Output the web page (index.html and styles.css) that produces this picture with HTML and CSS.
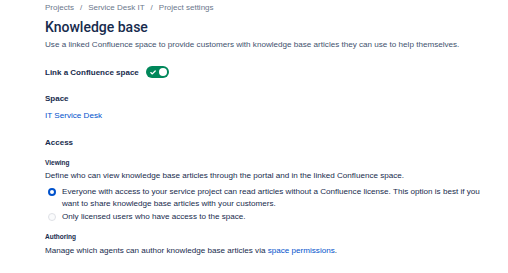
FILE: index.html
```html
<!DOCTYPE html>
<html lang="en">
<head>
    <meta charset="UTF-8">
    <title>Knowledge base</title>
    <link rel="stylesheet" href="styles.css">
</head>
<body>
    <div class="page">
        <nav class="crumbs">
            <a href="#">Projects</a><span class="sep">/</span><a href="#">Service Desk IT</a><span class="sep">/</span><a href="#">Project settings</a>
        </nav>
        <h1>Knowledge base</h1>
        <p class="lead">Use a linked Confluence space to provide customers with knowledge base articles they can use to help themselves.</p>

        <div class="toggle-row">
            <span class="toggle-label">Link a Confluence space</span>
            <span class="toggle">
                <svg class="tick" width="6" height="5" viewBox="0 0 6 5"><path d="M0.8 2.6 L2.3 3.9 L5.2 1" fill="none" stroke="#fff" stroke-width="1.3" stroke-linecap="round" stroke-linejoin="round"/></svg>
                <span class="knob"></span>
            </span>
        </div>

        <h2>Space</h2>
        <a class="link space-link" href="#">IT Service Desk</a>

        <h2 class="access">Access</h2>
        <h3>Viewing</h3>
        <p class="text define">Define who can view knowledge base articles through the portal and in the linked Confluence space.</p>
        <div class="radios">
            <label class="radio checked"><span class="dot"></span><span>Everyone with access to your service project can read articles without a Confluence license. This option is best if you want to share knowledge base articles with your customers.</span></label>
            <label class="radio"><span class="dot"></span><span>Only licensed users who have access to the space.</span></label>
        </div>

        <h3 class="authoring">Authoring</h3>
        <p class="text">Manage which agents can author knowledge base articles via <a class="link" href="#">space permissions</a>.</p>
    </div>
</body>
</html>
```

FILE: styles.css
```css
body {
    margin: 0;
    background: #fff;
    font-family: "Liberation Sans", Arial, sans-serif;
    color: #172b4d;
}
.page {
    padding: 2px 0 0 45px;
    width: 445px;
}
.crumbs {
    font-size: 8px;
    line-height: 12px;
    color: #6b778c;
}
.crumbs a {
    color: #6b778c;
    text-decoration: none;
}
.crumbs .sep {
    margin: 0 6px;
}
h1 {
    margin: 4px 0 0;
    font-family: Roboto, "Liberation Sans", sans-serif;
    font-size: 14px;
    line-height: 18px;
    font-weight: 500;
    color: #172b4d;
}
.lead {
    margin: 3px 0 0;
    font-size: 8.1px;
    line-height: 12px;
    color: #42526e;
}
.toggle-row {
    display: flex;
    align-items: center;
    gap: 7px;
    height: 14px;
    margin-top: 14px;
}
.toggle-label {
    font-size: 8px;
    font-weight: 700;
    color: #172b4d;
}
.toggle {
    display: flex;
    align-items: center;
    justify-content: space-between;
    width: 23px;
    height: 12px;
    padding: 0 2px 0 4px;
    box-sizing: border-box;
    border-radius: 6px;
    background: #00875a;
}
.knob {
    width: 8px;
    height: 8px;
    border-radius: 50%;
    background: #fff;
}
h2 {
    margin: 14px 0 0;
    font-size: 8px;
    line-height: 12px;
    font-weight: 700;
    color: #172b4d;
}
.link {
    color: #0052cc;
    text-decoration: none;
}
.space-link {
    display: block;
    margin-top: 5px;
    font-size: 8.1px;
    line-height: 12px;
}
h2.access {
    margin-top: 15px;
}
h3 {
    margin: 9px 0 0;
    font-size: 6.5px;
    line-height: 10px;
    font-weight: 700;
    color: #172b4d;
}
.text {
    margin: 3px 0 0;
    font-size: 8.1px;
    line-height: 12px;
    color: #172b4d;
}
.text.define {
    margin-top: 2px;
}
.radios {
    margin-top: 4px;
    padding-left: 3px;
}
.radio {
    display: flex;
    gap: 6px;
    font-size: 8.1px;
    line-height: 12px;
    color: #172b4d;
    margin-bottom: 1px;
}
.dot {
    flex: none;
    width: 8px;
    height: 8px;
    margin-top: 2px;
    border-radius: 50%;
    border: 1px solid #dfe1e6;
    background: #fafbfc;
    box-sizing: border-box;
}
.radio.checked .dot {
    border: 2.5px solid #0052cc;
    background: #fff;
}
h3.authoring {
    margin-top: 9px;
}
```
